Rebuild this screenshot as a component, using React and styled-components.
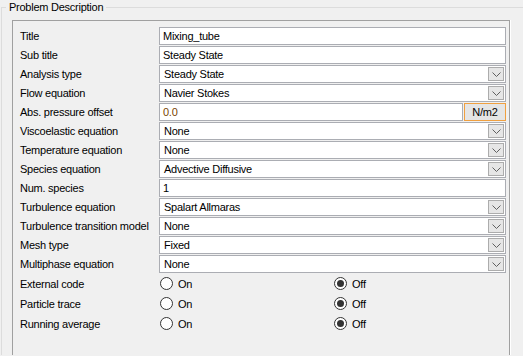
import styled, { createGlobalStyle } from "styled-components";

const GlobalStyle = createGlobalStyle`
  html, body {
    margin: 0;
    padding: 0;
    background: #f0f0f0;
    overflow: hidden;
  }
  body {
    font-family: "Liberation Sans", Arial, sans-serif;
    font-size: 11px;
    letter-spacing: -0.25px;
    color: #000;
  }
`;

const GroupBox = styled.fieldset`
  margin: 0 -20px 0 1px;
  padding: 0;
  border: 1px solid #dcdcdc;
  border-bottom: none;
  height: 355px;
  box-sizing: border-box;
  min-width: 0;
`;

const Legend = styled.legend`
  margin-left: 4px;
  padding: 0 3px;
  line-height: 14px;
  font-size: 11px;
`;

const Panel = styled.div`
  margin: 6px 0 0 10px;
  width: 498px;
  height: 337px;
  border: 1px solid #a0a0a0;
  border-bottom: none;
  box-shadow: 1px 0 0 #fff;
  padding: 6px 3px 0 7px;
  box-sizing: border-box;
`;

const Form = styled.div`
  display: grid;
  grid-template-columns: 139px 1fr;
  grid-template-rows: repeat(13, 18px) repeat(3, 19px);
  row-gap: 1px;
`;

const Label = styled.div`
  display: flex;
  align-items: center;
  white-space: nowrap;
`;

const TextBox = styled.div`
  display: flex;
  align-items: center;
  background: #fff;
  border: 1px solid #abadb3;
  padding: 0 3px;
  color: ${(p) => p.$color || "#000"};
  box-sizing: border-box;
  flex: 1;
  height: 18px;
`;

const Combo = styled.div`
  display: flex;
  align-items: center;
  background: #fff;
  border: 1px solid #abadb3;
  padding: 0 1px 0 4px;
  box-sizing: border-box;
  height: 18px;
`;

const ComboText = styled.span`
  flex: 1;
`;

const ArrowButton = styled.div`
  width: 16px;
  height: 14px;
  background: #e6e6e6;
  border: 1px solid #acacac;
  display: flex;
  align-items: center;
  justify-content: center;
  box-sizing: border-box;
`;

const Pair = styled.div`
  display: flex;
  gap: 1px;
`;

const UnitBox = styled.div`
  width: 42px;
  height: 18px;
  box-sizing: border-box;
  border: 1px solid #f0a040;
  background: #e5e5e5;
  display: flex;
  align-items: center;
  justify-content: center;
`;

const RadioGroup = styled.div`
  display: grid;
  grid-template-columns: 174px 1fr;
  align-items: center;
`;

const RadioOption = styled.div`
  display: flex;
  align-items: center;
  gap: 5px;
  padding-left: 1px;
`;

const RadioCircle = styled.span`
  width: 13px;
  height: 13px;
  box-sizing: border-box;
  border-radius: 50%;
  border: 1px solid #333;
  background: #fff;
  display: flex;
  align-items: center;
  justify-content: center;

  &::after {
    content: "";
    width: 7px;
    height: 7px;
    border-radius: 50%;
    background: ${(p) => (p.$checked ? "#333" : "transparent")};
  }
`;

const Chevron = () => (
  <svg width="9" height="5" viewBox="0 0 9 5">
    <polyline points="0.5,0.5 4.5,4.5 8.5,0.5" fill="none" stroke="#606060" strokeWidth="1" />
  </svg>
);

const Dropdown = ({ value }) => (
  <Combo>
    <ComboText>{value}</ComboText>
    <ArrowButton>
      <Chevron />
    </ArrowButton>
  </Combo>
);

const Radio = ({ on }) => (
  <RadioGroup>
    <RadioOption>
      <RadioCircle $checked={on} />
      On
    </RadioOption>
    <RadioOption>
      <RadioCircle $checked={!on} />
      Off
    </RadioOption>
  </RadioGroup>
);

const rows = [
  ["Title", "text", "Mixing_tube"],
  ["Sub title", "text", "Steady State"],
  ["Analysis type", "combo", "Steady State"],
  ["Flow equation", "combo", "Navier Stokes"],
  ["Abs. pressure offset", "unit", "0.0"],
  ["Viscoelastic equation", "combo", "None"],
  ["Temperature equation", "combo", "None"],
  ["Species equation", "combo", "Advective Diffusive"],
  ["Num. species", "text", "1"],
  ["Turbulence equation", "combo", "Spalart Allmaras"],
  ["Turbulence transition model", "combo", "None"],
  ["Mesh type", "combo", "Fixed"],
  ["Multiphase equation", "combo", "None"],
  ["External code", "radio", false],
  ["Particle trace", "radio", false],
  ["Running average", "radio", false],
];

const Field = ({ kind, value }) => {
  if (kind === "text") return <Pair><TextBox>{value}</TextBox></Pair>;
  if (kind === "combo") return <Dropdown value={value} />;
  if (kind === "unit")
    return (
      <Pair>
        <TextBox $color="#7a4400">{value}</TextBox>
        <UnitBox>N/m2</UnitBox>
      </Pair>
    );
  return <Radio on={value} />;
};

export default function App() {
  return (
    <>
      <GlobalStyle />
      <GroupBox>
        <Legend>Problem Description</Legend>
        <Panel>
          <Form>
            {rows.map(([label, kind, value]) => [
              <Label key={label + "-l"}>{label}</Label>,
              <Field key={label + "-f"} kind={kind} value={value} />,
            ])}
          </Form>
        </Panel>
      </GroupBox>
    </>
  );
}
